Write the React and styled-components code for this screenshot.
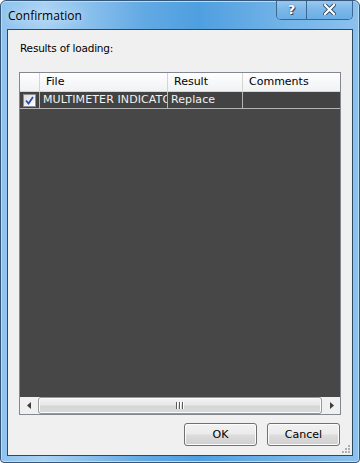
import styled, { createGlobalStyle } from "styled-components";

const Global = createGlobalStyle`
	html, body { margin: 0; padding: 0; background: #fff; }
	* { box-sizing: border-box; }
`;

const Window = styled.div`
	width: 360px;
	height: 463px;
	display: flex;
	flex-direction: column;
	border: 1px solid #34577a;
	border-radius: 6px 6px 4px 4px;
	background: linear-gradient(90deg, #8fc3ee 0%, #a9d2f3 12%, #62a9e4 40%, #4f9fe0 55%, #74b4e8 80%, #8cc1ee 100%);
	box-shadow: inset 0 0 0 1px #b9dcf6;
	overflow: hidden;
`;

const TitleBar = styled.div`
	height: 28px;
	display: flex;
	align-items: flex-start;
	justify-content: space-between;
	padding-left: 7px;
`;

const Title = styled.div`
	font-family: "Open Sans", "DejaVu Sans", sans-serif;
	font-size: 12px;
	color: #000;
	margin-top: 6px;
	text-shadow: 0 0 8px rgba(255,255,255,0.9);
`;

const Caption = styled.div`
	display: flex;
	margin-right: 6px;
	margin-top: -1px;
	border: 1px solid #3b6793;
	border-top: none;
	border-radius: 0 0 5px 5px;
	box-shadow: inset 0 0 0 1px rgba(210,235,252,0.7);
	overflow: hidden;
`;

const CapButton = styled.div`
	width: ${p => p.$w}px;
	height: 19px;
	display: flex;
	align-items: center;
	justify-content: center;
	background: linear-gradient(#9ccaf0, #7cb7e9 50%, #6aaee6);
	border-left: ${p => (p.$first ? "none" : "1px solid #3b6793")};
	font-family: "DejaVu Sans", sans-serif;
	font-weight: bold;
	font-size: 13px;
	color: #fff;
	text-shadow: 0 0 1px #1d3d5c, 1px 1px 0 #2c4a68;
`;

const Client = styled.div`
	flex: 1;
	margin: 0 6px 6px 6px;
	border: 1px solid #2e4964;
	background: #f0f0f0;
	display: flex;
	flex-direction: column;
	padding: 11px 11px 10px 11px;
	font-family: "DejaVu Sans", sans-serif;
	font-size: 10px;
	color: #000;
`;

const Label = styled.div`
	font-size: 10.5px;
	letter-spacing: -0.2px;
	padding-left: 1px;
	height: 14px;
	line-height: 14px;
`;

const Grid = styled.div`
	margin-top: 17px;
	height: 343px;
	border: 1px solid #828790;
	display: flex;
	flex-direction: column;
	background: #474747;
`;

const Row = styled.div`
	display: grid;
	grid-template-columns: 20px 128px 75px 1fr;
	height: ${p => p.$h}px;
`;

const HeadCell = styled.div`
	background: linear-gradient(#ffffff, #f7f8fa 50%, #f1f2f4);
	border-right: 1px solid #d5d5d5;
	border-bottom: 1px solid #d5d5d5;
	padding-left: 6px;
	line-height: 18px;
	font-size: 11px;
	color: #000;
	white-space: nowrap;
	overflow: hidden;
	&:last-child { border-right: none; }
`;

const Cell = styled.div`
	background: #434343;
	border-right: 1px solid #b4b4b4;
	border-bottom: 1px solid #b4b4b4;
	color: #f2f2f2;
	font-size: 11px;
	letter-spacing: 0.1px;
	line-height: 16px;
	padding-left: ${p => p.$pad ?? 3}px;
	white-space: nowrap;
	overflow: hidden;
	display: flex;
	align-items: center;
	&:last-child { border-right: none; }
`;

const Clip = styled.span`
	display: block;
	min-width: 0;
	overflow: hidden;
	text-overflow: clip;
`;

const Check = styled.div`
	width: 13px;
	height: 13px;
	border: 1px solid #8e8f8f;
	background: linear-gradient(135deg, #dcdcdc, #ffffff);
	display: flex;
	align-items: center;
	justify-content: center;
`;

const Body = styled.div`
	flex: 1;
`;

const HScroll = styled.div`
	height: 17px;
	display: flex;
	align-items: stretch;
	background: #f0f0f0;
`;

const Arrow = styled.div`
	width: 17px;
	display: flex;
	align-items: center;
	justify-content: center;
`;

const Track = styled.div`
	flex: 1;
	display: flex;
	padding: 0 1px;
`;

const Thumb = styled.div`
	flex: 1;
	border: 1px solid #979797;
	border-radius: 3px;
	background: linear-gradient(#f3f3f3, #e8e8e8 45%, #d6d6d6 55%, #dadada);
	box-shadow: inset 0 0 0 1px #fcfcfc;
	display: flex;
	align-items: center;
	justify-content: center;
`;

const Buttons = styled.div`
	margin-top: 8px;
	display: flex;
	justify-content: flex-end;
	gap: 10px;
	padding-right: 1px;
`;

const Button = styled.button`
	width: 73px;
	height: 23px;
	border: 1px solid #707070;
	border-radius: 3px;
	background: linear-gradient(#f2f2f2, #ebebeb 48%, #dddddd 52%, #cfcfcf);
	box-shadow: inset 0 0 0 1px #fcfcfc;
	font-family: "DejaVu Sans", sans-serif;
	font-size: 11px;
	color: #000;
	padding: 0;
`;

const Grip = styled.div`
	align-self: flex-end;
	margin: -2px -10px -9px 0;
	width: 10px;
	height: 10px;
`;

export default function App() {
	return (
		<>
			<Global />
			<Window>
				<TitleBar>
					<Title>Confirmation</Title>
					<Caption>
						<CapButton $w={29} $first>?</CapButton>
						<CapButton $w={46}>
							<svg width="13" height="11" viewBox="0 0 13 11">
								<path d="M2 1 L11 10 M11 1 L2 10" stroke="#2c4a68" strokeWidth="4" strokeLinecap="square" />
								<path d="M2 1 L11 10 M11 1 L2 10" stroke="#fff" strokeWidth="2.2" strokeLinecap="square" />
							</svg>
						</CapButton>
					</Caption>
				</TitleBar>
				<Client>
					<Label>Results of loading:</Label>
					<Grid>
						<Row $h={19}>
							<HeadCell />
							<HeadCell>File</HeadCell>
							<HeadCell>Result</HeadCell>
							<HeadCell>Comments</HeadCell>
						</Row>
						<Row $h={17}>
							<Cell $pad={3}>
								<Check>
									<svg width="9" height="9" viewBox="0 0 9 9">
										<path d="M1 4.5 L3.5 7.5 L8 1" fill="none" stroke="#2a4bb0" strokeWidth="1.8" />
									</svg>
								</Check>
							</Cell>
							<Cell><Clip>MULTIMETER INDICATOR</Clip></Cell>
							<Cell>Replace</Cell>
							<Cell />
						</Row>
						<Body />
						<HScroll>
							<Arrow>
								<svg width="4" height="7" viewBox="0 0 4 7"><path d="M4 0 L0 3.5 L4 7 Z" fill="#3c3c3c" /></svg>
							</Arrow>
							<Track>
								<Thumb>
									<svg width="8" height="7" viewBox="0 0 8 7">
										<path d="M0.5 0 V7 M3.5 0 V7 M6.5 0 V7" stroke="#5a5a5a" strokeWidth="1" />
										<path d="M1.5 0 V7 M4.5 0 V7 M7.5 0 V7" stroke="#ffffff" strokeWidth="1" />
									</svg>
								</Thumb>
							</Track>
							<Arrow>
								<svg width="4" height="7" viewBox="0 0 4 7"><path d="M0 0 L4 3.5 L0 7 Z" fill="#3c3c3c" /></svg>
							</Arrow>
						</HScroll>
					</Grid>
					<Buttons>
						<Button>OK</Button>
						<Button>Cancel</Button>
					</Buttons>
					<Grip>
						<svg width="10" height="10" viewBox="0 0 10 10" fill="#b0b0b0">
							<rect x="7" y="1" width="2" height="2" />
							<rect x="4" y="4" width="2" height="2" />
							<rect x="7" y="4" width="2" height="2" />
							<rect x="1" y="7" width="2" height="2" />
							<rect x="4" y="7" width="2" height="2" />
							<rect x="7" y="7" width="2" height="2" />
						</svg>
					</Grip>
				</Client>
			</Window>
		</>
	);
}
